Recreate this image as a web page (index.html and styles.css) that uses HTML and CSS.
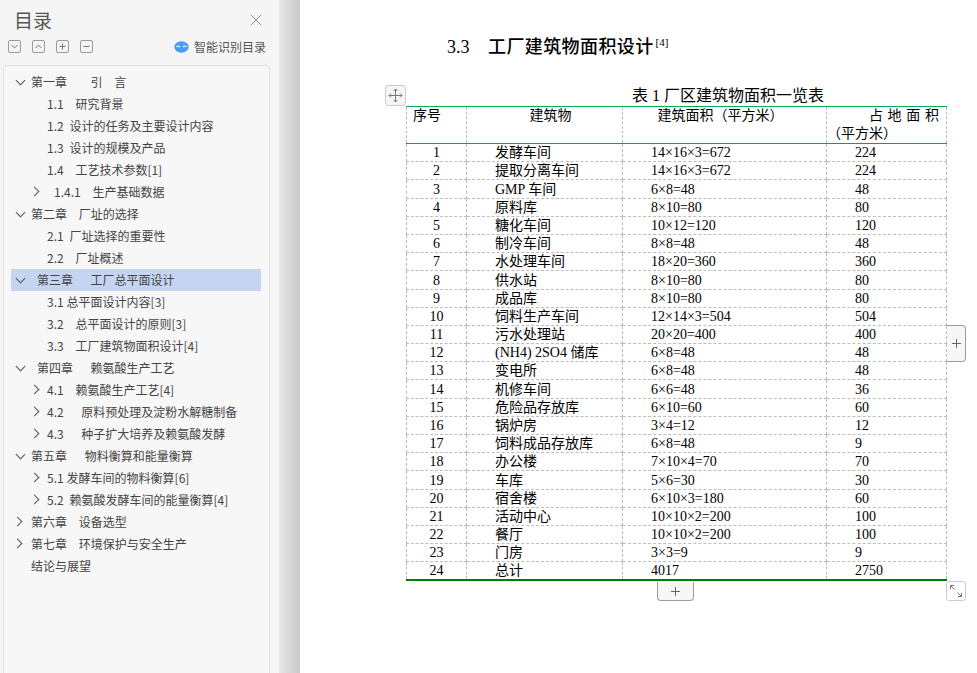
FILE: index.html
```html
<!DOCTYPE html>
<html lang="zh">
<head>
<meta charset="utf-8">
<title>目录</title>
<link rel="stylesheet" href="styles.css">
</head>
<body>
<div class="app">
  <aside class="sidebar">
    <header class="side-head">
      <h1 class="side-title">目录</h1>
      <button class="close" aria-label="关闭"><svg width="12" height="12" viewBox="0 0 12 12"><path d="M1 1l10 10M11 1L1 11" stroke="#8a8a8a" fill="none"/></svg></button>
    </header>
    <div class="toolbar">
      <span class="tool"><svg width="14" height="14" viewBox="0 0 14 14"><rect x=".5" y=".5" width="12" height="12" rx="1.5" class="tb"/><path d="M3.5 5l3 3 3-3" class="tl"/></svg></span>
      <span class="tool"><svg width="14" height="14" viewBox="0 0 14 14"><rect x=".5" y=".5" width="12" height="12" rx="1.5" class="tb"/><path d="M3.5 8l3-3 3 3" class="tl"/></svg></span>
      <span class="tool"><svg width="14" height="14" viewBox="0 0 14 14"><rect x=".5" y=".5" width="12" height="12" rx="1.5" class="tb"/><path d="M3.5 6.5h6M6.5 3.5v6" class="tl"/></svg></span>
      <span class="tool"><svg width="14" height="14" viewBox="0 0 14 14"><rect x=".5" y=".5" width="12" height="12" rx="1.5" class="tb"/><path d="M3.5 6.5h6" class="tl"/></svg></span>
      <span class="smart"><svg width="15" height="12" viewBox="0 0 15 12"><ellipse cx="7.500" cy="6" rx="7.200" ry="5.700" fill="#4d9bf5"/><path d="M2.500 6q1.800-1.800 3.500 0M9 6q1.800-1.800 3.500 0" stroke="#e4f0ff" stroke-width="1.300" fill="none"/></svg>智能识别目录</span>
    </div>
    <nav class="toc">
      <div class="row l1"><i class="chev down"></i><span class="label">第一章        引    言</span></div>
      <div class="row l2"><span class="label">1.1    研究背景</span></div>
      <div class="row l2"><span class="label">1.2  设计的任务及主要设计内容</span></div>
      <div class="row l2"><span class="label">1.3  设计的规模及产品</span></div>
      <div class="row l2"><span class="label">1.4    工艺技术参数[1]</span></div>
      <div class="row l3"><i class="chev right"></i><span class="label">1.4.1    生产基础数据</span></div>
      <div class="row l1"><i class="chev down"></i><span class="label">第二章    厂址的选择</span></div>
      <div class="row l2"><span class="label">2.1  厂址选择的重要性</span></div>
      <div class="row l2"><span class="label">2.2    厂址概述</span></div>
      <div class="row l1 active"><i class="chev down"></i><span class="label">  第三章      工厂总平面设计</span></div>
      <div class="row l2"><span class="label">3.1 总平面设计内容[3]</span></div>
      <div class="row l2"><span class="label">3.2    总平面设计的原则[3]</span></div>
      <div class="row l2"><span class="label">3.3    工厂建筑物面积设计[4]</span></div>
      <div class="row l1"><i class="chev down"></i><span class="label">  第四章      赖氨酸生产工艺</span></div>
      <div class="row l2 has"><i class="chev right"></i><span class="label">4.1    赖氨酸生产工艺[4]</span></div>
      <div class="row l2 has"><i class="chev right"></i><span class="label">4.2      原料预处理及淀粉水解糖制备</span></div>
      <div class="row l2 has"><i class="chev right"></i><span class="label">4.3      种子扩大培养及赖氨酸发酵</span></div>
      <div class="row l1"><i class="chev down"></i><span class="label">第五章      物料衡算和能量衡算</span></div>
      <div class="row l2 has"><i class="chev right"></i><span class="label">5.1 发酵车间的物料衡算[6]</span></div>
      <div class="row l2 has"><i class="chev right"></i><span class="label">5.2  赖氨酸发酵车间的能量衡算[4]</span></div>
      <div class="row l1"><i class="chev right"></i><span class="label">第六章    设备选型</span></div>
      <div class="row l1"><i class="chev right"></i><span class="label">第七章    环境保护与安全生产</span></div>
      <div class="row l1"><i class="chev"></i><span class="label">结论与展望</span></div>
    </nav>
  </aside>
  <div class="shade"></div>
  <main class="doc">
    <h2 class="heading"><span class="hnum">3.3</span>工厂建筑物面积设计<sup class="cite">[4]</sup></h2>
    <p class="caption">表 1 厂区建筑物面积一览表</p>
    <div class="table-wrap">
      <table class="data">
        <colgroup><col class="c1"><col class="c2"><col class="c3"><col class="c4"></colgroup>
        <thead>
          <tr><th class="th-left">序号</th><th class="th-name">建筑物</th><th class="th-area">建筑面积（平方米）</th><th class="th-split"><span class="top">占 地 面 积</span><span class="sub">（平方米）</span></th></tr>
        </thead>
        <tbody>
          <tr><td>1</td><td>发酵车间</td><td>14×16×3=672</td><td>224</td></tr>
          <tr><td>2</td><td>提取分离车间</td><td>14×16×3=672</td><td>224</td></tr>
          <tr><td>3</td><td>GMP 车间</td><td>6×8=48</td><td>48</td></tr>
          <tr><td>4</td><td>原料库</td><td>8×10=80</td><td>80</td></tr>
          <tr><td>5</td><td>糖化车间</td><td>10×12=120</td><td>120</td></tr>
          <tr><td>6</td><td>制冷车间</td><td>8×8=48</td><td>48</td></tr>
          <tr><td>7</td><td>水处理车间</td><td>18×20=360</td><td>360</td></tr>
          <tr><td>8</td><td>供水站</td><td>8×10=80</td><td>80</td></tr>
          <tr><td>9</td><td>成品库</td><td>8×10=80</td><td>80</td></tr>
          <tr><td>10</td><td>饲料生产车间</td><td>12×14×3=504</td><td>504</td></tr>
          <tr><td>11</td><td>污水处理站</td><td>20×20=400</td><td>400</td></tr>
          <tr><td>12</td><td>(NH4) 2SO4 储库</td><td>6×8=48</td><td>48</td></tr>
          <tr><td>13</td><td>变电所</td><td>6×8=48</td><td>48</td></tr>
          <tr><td>14</td><td>机修车间</td><td>6×6=48</td><td>36</td></tr>
          <tr><td>15</td><td>危险品存放库</td><td>6×10=60</td><td>60</td></tr>
          <tr><td>16</td><td>锅炉房</td><td>3×4=12</td><td>12</td></tr>
          <tr><td>17</td><td>饲料成品存放库</td><td>6×8=48</td><td>9</td></tr>
          <tr><td>18</td><td>办公楼</td><td>7×10×4=70</td><td>70</td></tr>
          <tr><td>19</td><td>车库</td><td>5×6=30</td><td>30</td></tr>
          <tr><td>20</td><td>宿舍楼</td><td>6×10×3=180</td><td>60</td></tr>
          <tr><td>21</td><td>活动中心</td><td>10×10×2=200</td><td>100</td></tr>
          <tr><td>22</td><td>餐厅</td><td>10×10×2=200</td><td>100</td></tr>
          <tr><td>23</td><td>门房</td><td>3×3=9</td><td>9</td></tr>
          <tr><td>24</td><td>总计</td><td>4017</td><td>2750</td></tr>
        </tbody>
      </table>
      <span class="handle move"><svg width="17" height="17" viewBox="0 0 17 17"><path d="M8.500 2v13M2 8.500h13M6.500 4l2-2 2 2M6.500 13l2 2 2-2M4 6.500l-2 2 2 2M13 6.500l2 2-2 2" stroke="#777" fill="none"/></svg></span>
      <span class="handle add-col"><svg width="11" height="11" viewBox="0 0 11 11"><path d="M5.500 1v9M1 5.500h9" stroke="#666" fill="none"/></svg></span>
      <span class="handle add-row"><svg width="11" height="11" viewBox="0 0 11 11"><path d="M5.500 1v9M1 5.500h9" stroke="#666" fill="none"/></svg></span>
      <span class="handle resize"><svg width="16" height="16" viewBox="0 0 16 16"><path d="M2.500 2.500l4 4M2.500 2.500h3.500M2.500 2.500v3.500M13.500 13.500l-4-4M13.500 13.500h-3.500M13.500 13.500v-3.500" stroke="#777" fill="none"/></svg></span>
    </div>
  </main>
</div>
</body>
</html>
```

FILE: styles.css
```css
* { box-sizing: border-box; }
html, body { margin: 0; height: 100%; background: #fff; overflow: hidden; }
.app { display: flex; width: 977px; height: 673px; }

.sidebar {
  width: 279px; flex: none; background: #f5f5f5; display: flex; flex-direction: column;
  font-family: "Noto Sans CJK SC", "Noto Sans", sans-serif; color: #444; font-size: 12px;
}
.side-head { display: flex; justify-content: space-between; align-items: center; height: 40px; padding: 0 17px 0 14px; }
.side-title { margin: 0; font-size: 19px; font-weight: 400; line-height: 40px; color: #555; }
.close { border: 0; background: none; padding: 0; width: 12px; height: 12px; display: block; margin-top: -1px; }
.close svg { display: block; }
.toolbar { display: flex; align-items: center; gap: 10px; height: 14px; padding: 0 13px 0 8px; }
.tool { display: block; width: 14px; height: 14px; }
.tool svg { display: block; }
.tb { fill: #f5f5f5; stroke: #9a9a9a; }
.tl { fill: none; stroke: #777; }
.smart { margin-left: auto; display: flex; align-items: center; gap: 5px; line-height: 14px; color: #555; }
.toc {
  margin: 11px 0 0 3px; width: 267px; flex: 1; padding: 5px 0 0 7px;
  background: #f7f7f7; border: 1px solid #e2e2e2; border-bottom: 0; border-radius: 4px 4px 0 0;
}
.row { position: relative; display: flex; align-items: center; width: 250px; height: 22px; white-space: pre; line-height: 22px; word-spacing: .25px; }
.row.active { background: #c5d5f1; }
.l1 { padding-left: 20px; }
.l2 { padding-left: 36px; }
.l3 { padding-left: 43px; }
.chev { position: absolute; top: 7px; width: 7px; height: 7px; }
.chev.down, .l1 .chev.right { left: 5px; }
.l2 .chev, .l3 .chev { left: 22px; }
.chev.down::before, .chev.right::before {
  content: ""; position: absolute; width: 6px; height: 6px;
  border-right: 1px solid #555; border-bottom: 1px solid #555;
}
.chev.down::before { left: 2px; top: -1px; transform: rotate(45deg); }
.chev.right::before { left: -2px; top: 0; transform: rotate(-45deg); }
.l1 .chev.down::before { left: 1px; }

.shade { width: 21px; flex: none; background: linear-gradient(90deg, #e8e8e8, #c8c8c8); }
.doc { flex: 1; padding: 34px 0 0 106px; color: #000; font-family: "Liberation Serif", "Noto Sans CJK SC", serif; }
.heading { margin: 0 0 0 41px; font-size: 18px; font-weight: 500; line-height: 26px; font-family: "Liberation Serif", "Noto Sans CJK SC", serif; white-space: nowrap; letter-spacing: .4px; }
.hnum { display: inline-block; width: 41px; font-weight: 400; letter-spacing: 0; }
.cite { font-size: 11px; font-weight: 400; line-height: 0; vertical-align: 7px; margin-left: 2px; letter-spacing: 0; }
.caption { margin: 26px 0 0 226px; font-size: 16px; line-height: 20px; height: 20px; white-space: nowrap; }
.table-wrap { position: relative; width: 540px; }
.data { border-collapse: collapse; table-layout: fixed; width: 540px; font-size: 14px; line-height: 16px; }
.c1 { width: 60px; } .c2 { width: 156px; } .c3 { width: 204px; } .c4 { width: 120px; }
.data th, .data td { border: 1px dashed #bdbdbd; padding: 0 0 0 28px; text-align: left; font-weight: 400; height: 18.2px; white-space: nowrap; vertical-align: bottom; }
.data th { vertical-align: top; text-align: center; padding: 0; height: 37px; line-height: 18px; border-top: 1px solid #00b050; border-bottom: 1px solid #00a650; }
.data .th-left { text-align: left; padding-left: 6px; }
.data .th-name { padding-left: 12px; }
.data .th-area { padding-right: 8px; }
.top { display: block; text-align: right; padding-right: 7px; word-spacing: 1.2px; }
.sub { display: block; text-align: left; }
.data td:first-child { text-align: center; padding: 0; }
.data tbody tr:first-child td { border-top: 1px solid #00a650; }
.data tbody tr:last-child td { border-bottom: 2px solid #008000; }

.handle { position: absolute; display: flex; align-items: center; justify-content: center; background: #f7f7f7; }
.move { left: -21px; top: -21px; width: 21px; height: 21px; border: 1px solid #ccc; border-radius: 3px; background: #f5f5f5; }
.add-col { left: 541px; top: 219px; width: 19px; height: 37px; border: 1px solid #9c9c9c; border-left: 0; border-radius: 0 4px 4px 0; }
.add-row { left: 251px; top: 476px; width: 37px; height: 19px; border: 1px solid #9c9c9c; border-top: 0; border-radius: 0 0 4px 4px; }
.resize { left: 540px; top: 475px; width: 20px; height: 20px; border: 1px solid #ccc; border-radius: 3px; background: #fff; }
```
